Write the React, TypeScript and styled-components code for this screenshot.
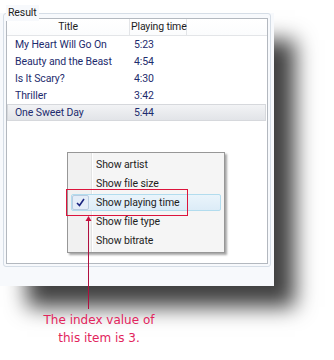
import React from 'react';
import styled, { createGlobalStyle } from 'styled-components';

const songs = [
  { title: 'My Heart Will Go On', time: '5:23' },
  { title: 'Beauty and the Beast', time: '4:54' },
  { title: 'Is It Scary?', time: '4:30' },
  { title: 'Thriller', time: '3:42' },
  { title: 'One Sweet Day', time: '5:44' },
];

const menuItems = [
  'Show artist',
  'Show file size',
  'Show playing time',
  'Show file type',
  'Show bitrate',
];

const columns = '123px 57px 1fr';

const GlobalStyle = createGlobalStyle`
  body {
    margin: 0;
    background: #ffffff;
    font-family: Roboto, "Open Sans", sans-serif;
  }
`;

const Stage = styled.div`
  position: relative;
  width: 334px;
  height: 360px;
  overflow: hidden;
`;

const Window = styled.div`
  box-sizing: border-box;
  width: 274px;
  height: 273px;
  padding: 0 3px 6px;
  background: #f7f9fc;
  box-shadow: 24px 24px 20px -3px rgba(0, 0, 0, 0.75);
`;

const GroupBox = styled.div`
  position: relative;
  box-sizing: border-box;
  height: 254px;
  margin-top: 13px;
  padding: 4px 2px 2px;
  border: 1px solid #d5dde6;
  border-radius: 3px;
`;

const Legend = styled.span`
  position: absolute;
  top: -9px;
  left: 2px;
  padding: 0 2px;
  background: #f7f9fc;
  font-size: 10.5px;
  letter-spacing: -0.1px;
  line-height: 16px;
  color: #1e1e1e;
`;

const ListView = styled.div`
  box-sizing: border-box;
  height: 246px;
  border: 1px solid #b3b8bf;
  background: #ffffff;
`;

const Header = styled.div`
  display: grid;
  grid-template-columns: ${columns};
  height: 16px;
  border-bottom: 1px solid #e3e5e8;
  background: linear-gradient(#ffffff, #fbfcfd);
`;

const HeaderCell = styled.div<{ center?: boolean; last?: boolean }>`
  border-right: ${({ last }) => (last ? 'none' : '1px solid #e3e5e8')};
  padding-left: ${({ center }) => (center ? 0 : 1)}px;
  text-align: ${({ center }) => (center ? 'center' : 'left')};
  font-size: 10.5px;
  letter-spacing: -0.15px;
  line-height: 16px;
  color: #1e1e1e;
  white-space: nowrap;
`;

const Row = styled.div<{ selected?: boolean }>`
  display: grid;
  grid-template-columns: ${columns};
  box-sizing: border-box;
  height: 17px;
  margin: 0 1px 0 0;
  border: 1px solid ${({ selected }) => (selected ? '#d6d8dc' : 'transparent')};
  background: ${({ selected }) =>
    selected ? 'linear-gradient(#f2f3f5, #e2e4e8)' : 'transparent'};
  font-size: 10.5px;
  letter-spacing: -0.1px;
  line-height: 15px;
  color: #1e2c6e;
`;

const Cell = styled.div<{ indent: number }>`
  padding-left: ${({ indent }) => indent}px;
  white-space: nowrap;
`;

const Menu = styled.div`
  position: absolute;
  left: 67px;
  top: 152px;
  display: flex;
  flex-direction: column;
  box-sizing: border-box;
  width: 158px;
  height: 101px;
  padding: 2px 2px 1px;
  border: 1px solid #979797;
  background: linear-gradient(
    90deg,
    #f1f1f1 0,
    #f1f1f1 23px,
    #e2e3e3 23px,
    #e2e3e3 24px,
    #ffffff 24px,
    #ffffff 25px,
    #f5f5f5 25px
  );
  box-shadow: 2px 2px 2px rgba(0, 0, 0, 0.35);
`;

const MenuItem = styled.div<{ active?: boolean }>`
  display: flex;
  align-items: center;
  box-sizing: border-box;
  height: 17px;
  margin: 1px 1px;
  border: 1px solid ${({ active }) => (active ? '#b2dcee' : 'transparent')};
  border-radius: 2px;
  background: ${({ active }) =>
    active ? 'linear-gradient(#eaf4fb, #dcecf7)' : 'transparent'};
  font-size: 10.5px;
  letter-spacing: -0.1px;
  color: #1e1e1e;
`;

const CheckBox = styled.div<{ visible?: boolean }>`
  box-sizing: border-box;
  width: 17px;
  height: 15px;
  margin-right: 7px;
  border: 1px solid ${({ visible }) => (visible ? '#b8cbe0' : 'transparent')};
  border-radius: 2px;
  background: ${({ visible }) => (visible ? '#e4edf8' : 'transparent')};
  display: flex;
  align-items: center;
  justify-content: center;
`;

const Highlight = styled.div`
  position: absolute;
  left: 66px;
  top: 189px;
  width: 120px;
  height: 25px;
  border: 1px solid #dc143c;
`;

const Arrow = styled.svg`
  position: absolute;
  left: 84px;
  top: 215px;
`;

const Caption = styled.div`
  position: absolute;
  left: 38px;
  top: 311px;
  width: 122px;
  text-align: center;
  font-family: "DejaVu Sans", sans-serif;
  font-size: 12px;
  line-height: 18px;
  color: #e2245c;
`;

const Check = () => (
  <svg width="11" height="11" viewBox="0 0 11 11">
    <path
      d="M2 6 L4.5 8.5 L9 2"
      fill="none"
      stroke="#1a2580"
      strokeWidth="1.6"
    />
  </svg>
);

const App: React.FC = () => {
  return (
    <Stage>
      <GlobalStyle />
      <Window>
        <GroupBox>
          <Legend>Result</Legend>
          <ListView>
            <Header>
              <HeaderCell center>Title</HeaderCell>
              <HeaderCell>Playing time</HeaderCell>
              <HeaderCell last />
            </Header>
            {songs.map((song, i) => (
              <Row key={song.title} selected={i === songs.length - 1}>
                <Cell indent={7}>{song.title}</Cell>
                <Cell indent={3}>{song.time}</Cell>
              </Row>
            ))}
          </ListView>
        </GroupBox>
      </Window>

      <Menu>
        {menuItems.map((label, i) => (
          <MenuItem key={label} active={i === 2}>
            <CheckBox visible={i === 2}>{i === 2 && <Check />}</CheckBox>
            {label}
          </MenuItem>
        ))}
      </Menu>

      <Highlight />
      <Arrow width="9" height="95" viewBox="0 0 9 95">
        <path d="M4.5 3 L4.5 94" stroke="#b01040" strokeWidth="1" />
        <path d="M4.5 1 L1.5 6 L7.5 6 Z" fill="#c8103e" />
      </Arrow>
      <Caption>
        The index value of
        <br />
        this item is 3.
      </Caption>
    </Stage>
  );
};

export default App;
